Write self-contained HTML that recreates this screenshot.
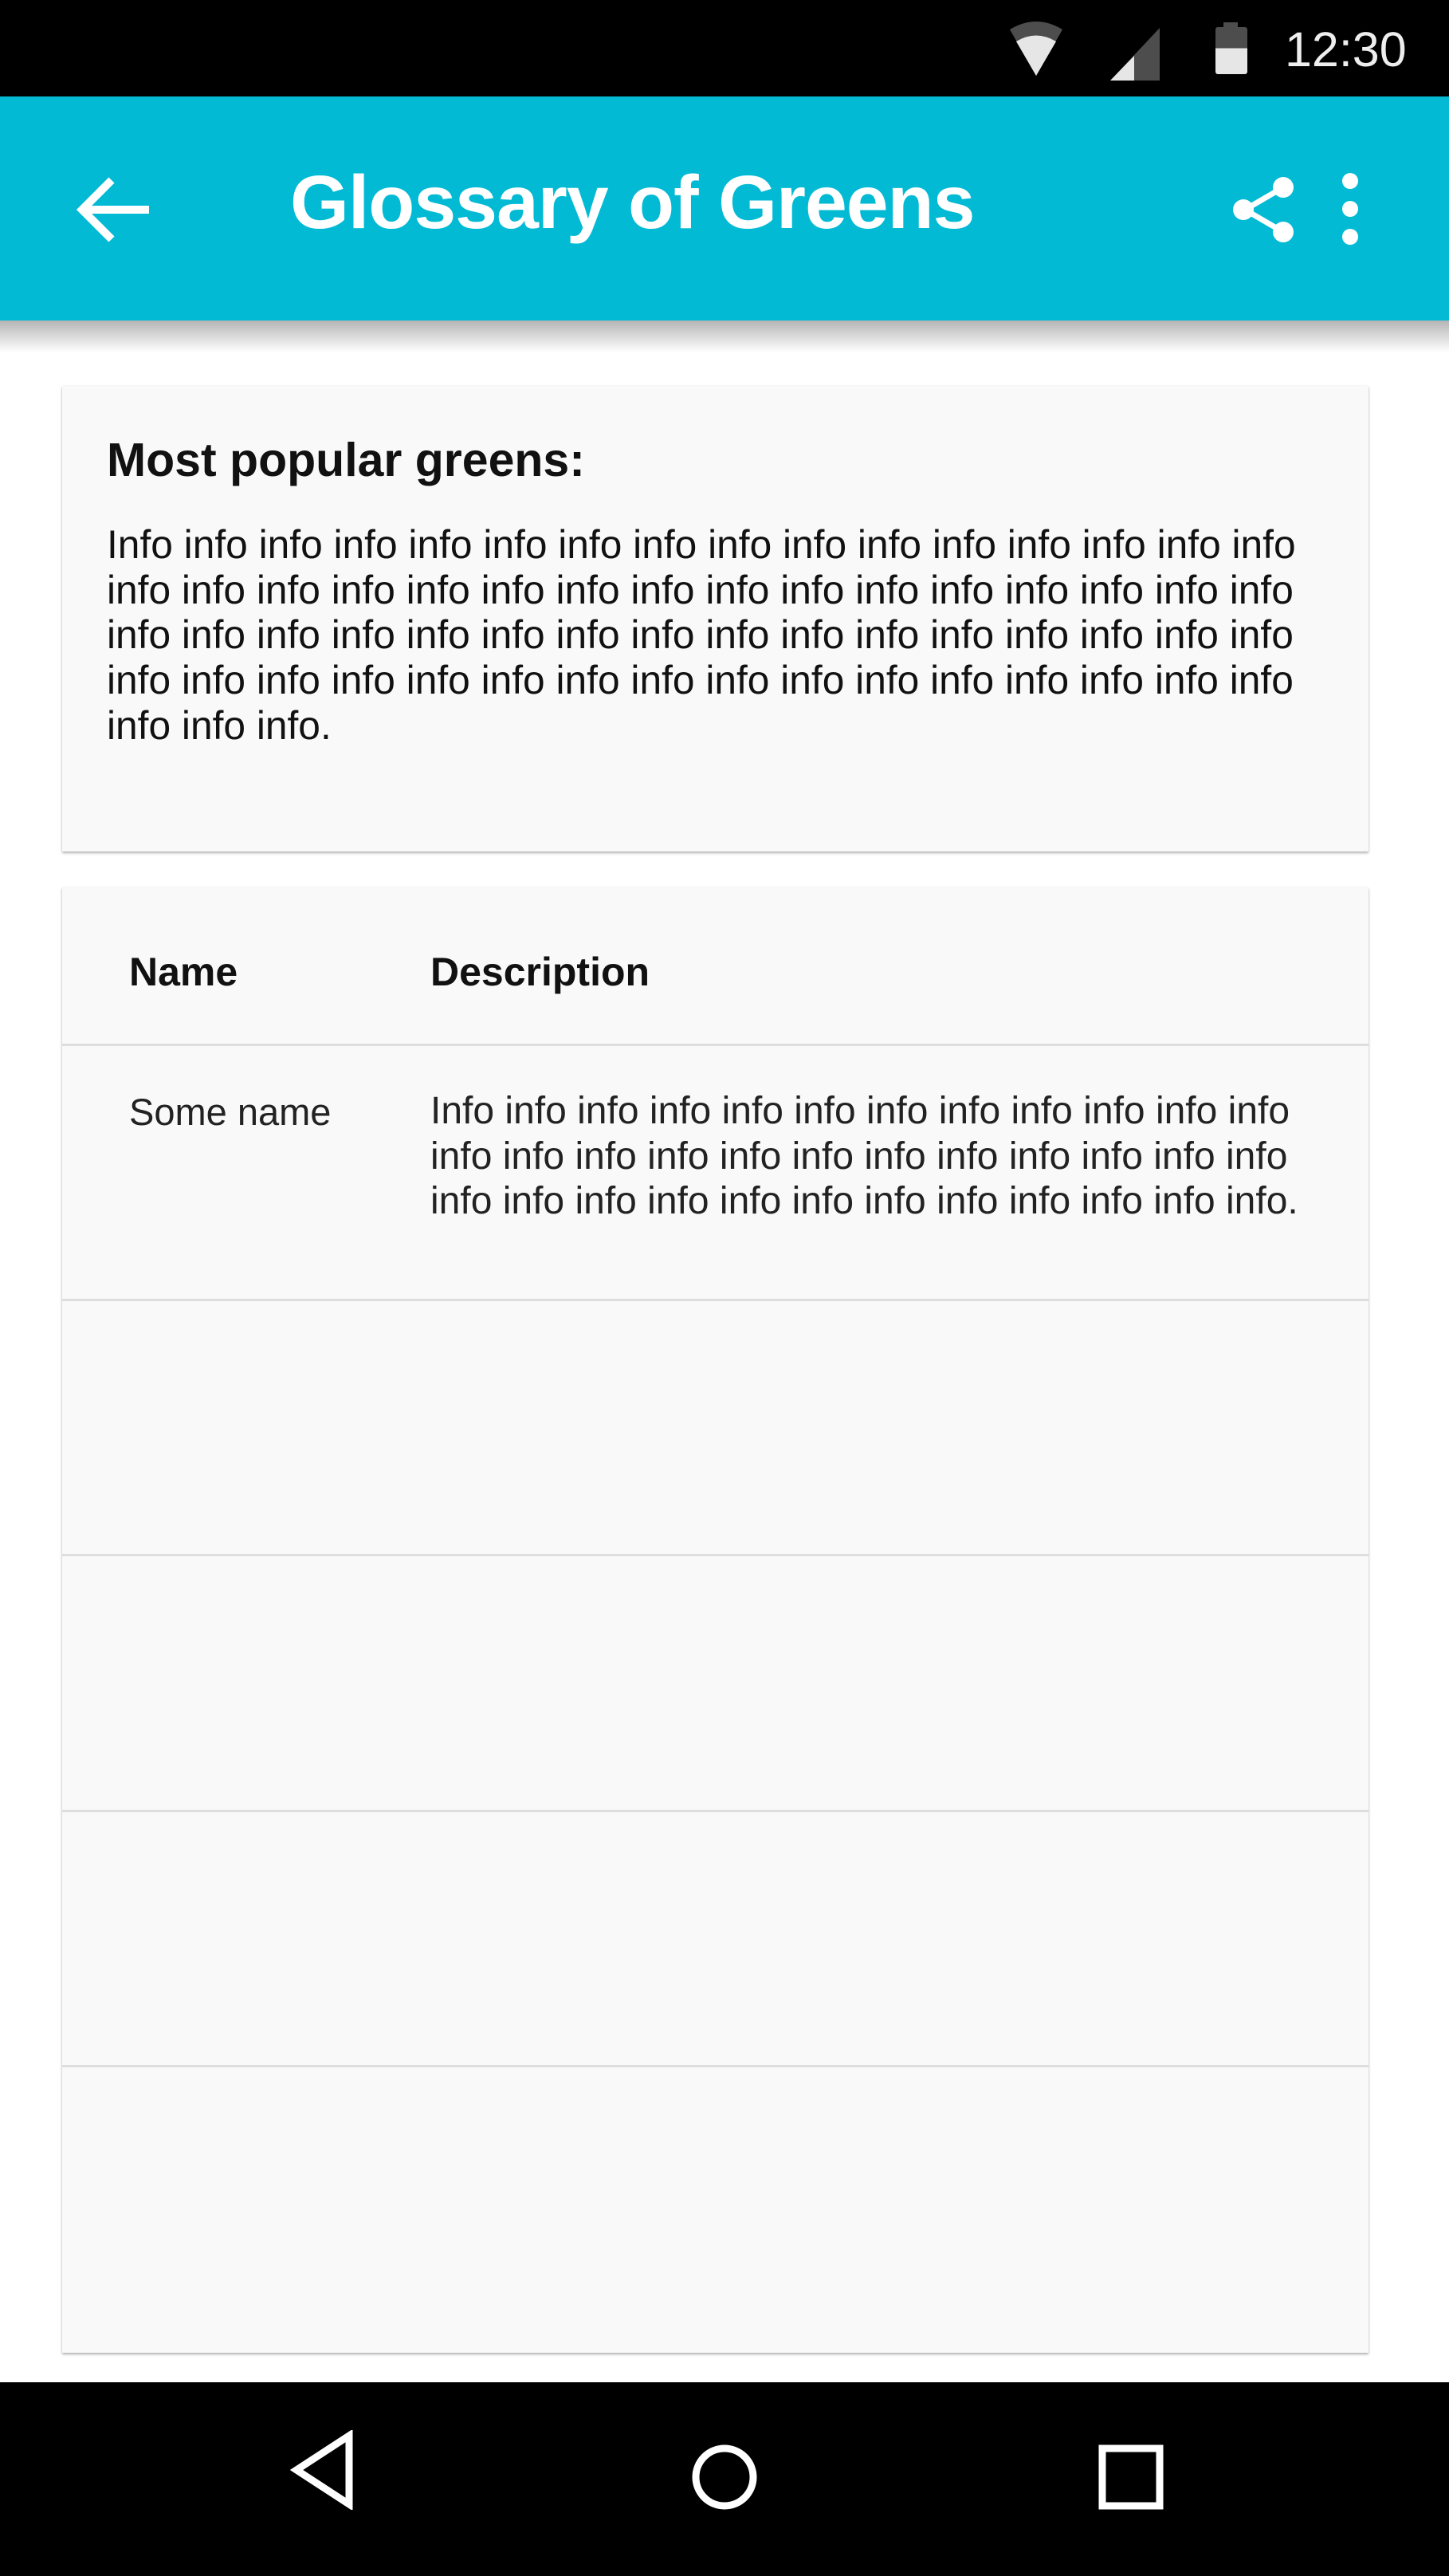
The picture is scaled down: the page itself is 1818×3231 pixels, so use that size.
<!DOCTYPE html>
<html><head><meta charset="utf-8"><style>
*{margin:0;padding:0;box-sizing:border-box}
html,body{width:1818px;height:3231px;overflow:hidden;background:#fff;font-family:"Liberation Sans",sans-serif}
.abs{position:absolute}
#status{left:0;top:0;width:1818px;height:121px;background:#000}
#bar{left:0;top:121px;width:1818px;height:281px;background:#03BAD5}
#shadow{left:0;top:402px;width:1818px;height:40px;background:linear-gradient(#b5b5b5,rgba(255,255,255,0))}
.card{background:#f9f9f9;box-shadow:0 2px 3px rgba(0,0,0,.3),0 0 1px rgba(0,0,0,.12)}
.line{white-space:nowrap}
#nav{left:0;top:2988px;width:1818px;height:243px;background:#000}
.hr{height:3px;background:#dedede;left:0;width:1639px}
</style></head><body>
<div id="status" class="abs">
<svg class="abs" style="left:1260px;top:25px" width="80" height="70" viewBox="0 0 80 70"><path d="M7 12 Q40 -8 73 12 L40 70 Z" fill="#4d4d4d"/><path d="M15 27 Q40 12 65 27 L40 70 Z" fill="#e6e6e6"/></svg>
<svg class="abs" style="left:1393px;top:35px" width="62" height="66" viewBox="0 0 62 66"><path d="M62 0 L62 66 L0 66 Z" fill="#4d4d4d"/><path d="M30 35 L30 66 L0 66 Z" fill="#e6e6e6"/></svg>
<div class="abs" style="left:1535px;top:28px;width:18px;height:8px;background:#4d4d4d"></div>
<div class="abs" style="left:1525px;top:34px;width:40px;height:59px;background:linear-gradient(#4d4d4d 0 45%,#e6e6e6 45%);border-radius:3px"></div>
<div class="abs" style="left:1612px;top:22px;font-size:61px;color:#eee;line-height:80px">12:30</div>
</div>
<div id="bar" class="abs">
<svg class="abs" style="left:95px;top:97px" width="96" height="90" viewBox="0 0 96 90"><path d="M92 45 H12 M45 8 L8 45 L45 82" stroke="#fff" stroke-width="10" fill="none"/></svg>
<div class="abs" style="left:364px;top:78px;font-size:95px;font-weight:bold;color:#fff;line-height:110px;letter-spacing:-1px">Glossary of Greens</div>
<svg class="abs" style="left:1540px;top:94px" width="90" height="95" viewBox="0 0 90 95"><path d="M70 20 L22 48 L70 76" stroke="#fff" stroke-width="7" fill="none"/><circle cx="70" cy="20" r="13" fill="#fff"/><circle cx="20" cy="48" r="13" fill="#fff"/><circle cx="70" cy="76" r="13" fill="#fff"/></svg>
<svg class="abs" style="left:1680px;top:96px" width="30" height="120" viewBox="0 0 30 120"><circle cx="14" cy="10" r="10" fill="#fff"/><circle cx="14" cy="45" r="10" fill="#fff"/><circle cx="14" cy="80" r="10" fill="#fff"/></svg>
</div>
<div id="shadow" class="abs"></div>
<div class="card abs" style="left:78px;top:484px;width:1639px;height:584px">
<div class="abs" style="left:56px;top:58px;font-size:59px;font-weight:bold;color:#111;line-height:70px">Most popular greens:</div>
<div class="abs" style="left:56px;top:171px;font-size:49.7px;color:#111;line-height:56.7px">
<div class="line">Info info info info info info info info info info info info info info info info</div>
<div class="line">info info info info info info info info info info info info info info info info</div>
<div class="line">info info info info info info info info info info info info info info info info</div>
<div class="line">info info info info info info info info info info info info info info info info</div>
<div class="line">info info info.</div>
</div>
</div>
<div class="card abs" style="left:78px;top:1113px;width:1639px;height:1838px">
<div class="abs" style="left:84px;top:75px;font-size:50px;font-weight:bold;color:#111;line-height:62px">Name</div>
<div class="abs" style="left:462px;top:75px;font-size:50px;font-weight:bold;color:#111;line-height:62px">Description</div>
<div class="abs hr" style="top:196px"></div>
<div class="abs" style="left:84px;top:252px;font-size:47px;color:#222;line-height:60px">Some name</div>
<div class="abs" style="left:462px;top:253px;font-size:48px;color:#222;line-height:56.7px">
<div class="line">Info info info info info info info info info info info info</div>
<div class="line">info info info info info info info info info info info info</div>
<div class="line">info info info info info info info info info info info info.</div>
</div>
<div class="abs hr" style="top:516px"></div>
<div class="abs hr" style="top:836px"></div>
<div class="abs hr" style="top:1157px"></div>
<div class="abs hr" style="top:1477px"></div>
</div>
<div id="nav" class="abs">
<svg class="abs" style="left:355px;top:60px" width="100" height="100" viewBox="0 0 100 100"><path d="M83 7 V93 L17 50 Z" stroke="#fff" stroke-width="9" fill="none" stroke-linejoin="miter"/></svg>
<svg class="abs" style="left:865px;top:75px" width="90" height="90" viewBox="0 0 90 90"><circle cx="44" cy="44" r="36" stroke="#fff" stroke-width="9" fill="none"/></svg>
<svg class="abs" style="left:1375px;top:75px" width="90" height="90" viewBox="0 0 90 90"><rect x="8" y="8" width="72" height="72" stroke="#fff" stroke-width="9" fill="none"/></svg>
</div>
</body></html>
